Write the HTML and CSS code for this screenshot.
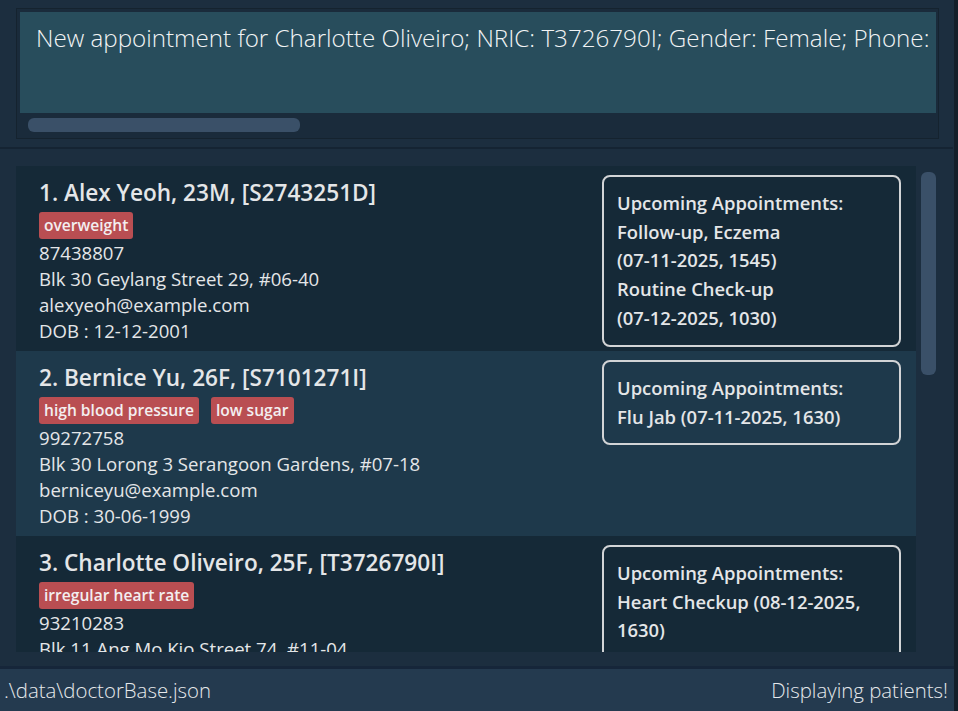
FILE: index.html
```html
<!DOCTYPE html>
<html>
<head>
<meta charset="utf-8">
<link rel="stylesheet" href="styles.css">
</head>
<body>
<div class="app">
  <section class="command">
    <div class="command-box">
      <div class="command-text">New appointment for Charlotte Oliveiro; NRIC: T3726790I; Gender: Female; Phone: 93210283</div>
      <div class="hscroll"><div class="hthumb"></div></div>
    </div>
  </section>
  <div class="separator"></div>
  <section class="list-panel">
    <div class="list">
      <div class="card odd">
        <div class="info">
          <div class="name">1. Alex Yeoh, 23M, [S2743251D]</div>
          <div class="tags"><span class="tag">overweight</span></div>
          <div class="line">87438807</div>
          <div class="line">Blk 30 Geylang Street 29, #06-40</div>
          <div class="line">alexyeoh@example.com</div>
          <div class="line">DOB : 12-12-2001</div>
        </div>
        <div class="appts">
          <div>Upcoming Appointments:</div>
          <div><span class="nb">Follow-up,</span> Eczema <span class="nb">(07-11-2025, 1545)</span></div>
          <div>Routine <span class="nb">Check-up</span> <span class="nb">(07-12-2025, 1030)</span></div>
        </div>
      </div>
      <div class="card even">
        <div class="info">
          <div class="name">2. Bernice Yu, 26F, [S7101271I]</div>
          <div class="tags"><span class="tag">high blood pressure</span><span class="tag">low sugar</span></div>
          <div class="line">99272758</div>
          <div class="line">Blk 30 Lorong 3 Serangoon Gardens, #07-18</div>
          <div class="line">berniceyu@example.com</div>
          <div class="line">DOB : 30-06-1999</div>
        </div>
        <div class="appts">
          <div>Upcoming Appointments:</div>
          <div>Flu Jab <span class="nb">(07-11-2025, 1630)</span></div>
        </div>
      </div>
      <div class="card odd">
        <div class="info">
          <div class="name">3. Charlotte Oliveiro, 25F, [T3726790I]</div>
          <div class="tags"><span class="tag">irregular heart rate</span></div>
          <div class="line">93210283</div>
          <div class="line">Blk 11 Ang Mo Kio Street 74, #11-04</div>
        </div>
        <div class="appts">
          <div>Upcoming Appointments:</div>
          <div>Heart Checkup <span class="nb">(08-12-2025,</span> 1630)</div>
        </div>
      </div>
    </div>
    <div class="vscroll"><div class="vthumb"></div></div>
  </section>
  <footer class="status">
    <span>.\data\doctorBase.json</span>
    <span>Displaying patients!</span>
  </footer>
</div>
<div class="edge"></div>
</body>
</html>
```

FILE: styles.css
```css
* { box-sizing: border-box; }
html, body { margin: 0; padding: 0; }
body {
  width: 958px;
  height: 711px;
  overflow: hidden;
  display: flex;
  background: #1c2e3f;
  font-family: "Open Sans", "Noto Sans", sans-serif;
  color: #e4e6e8;
}
.app {
  width: 954px;
  height: 711px;
  display: flex;
  flex-direction: column;
  background: #1c2e3f;
}
.edge {
  width: 4px;
  height: 711px;
  background: #141f2a;
}
.command {
  padding: 8px 15px 0 16px;
  height: 147px;
}
.command-box {
  background: #1a2b3b;
  border: 1px solid #15232f;
  padding: 3px 2px 1px 3px;
  height: 131px;
  display: flex;
  flex-direction: column;
}
.command-text {
  height: 101px;
  background: #284d5c;
  color: #f2f4f5;
  font-size: 24.2px;
  font-weight: 300;
  line-height: 32px;
  white-space: nowrap;
  overflow: hidden;
  padding: 10px 0 0 16px;
}
.hscroll {
  flex: 1;
  padding: 5px 0 0 8px;
}
.hthumb {
  width: 272px;
  height: 14px;
  border-radius: 6px;
  background: #3a5068;
}
.separator {
  height: 2px;
  background: #152433;
  margin-right: 1px;
}
.list-panel {
  flex: 1;
  display: flex;
  padding: 17px 15px 14px 16px;
  min-height: 0;
}
.list {
  flex: 1;
  overflow: hidden;
}
.card {
  display: flex;
  justify-content: space-between;
  padding: 0 15px 0 23px;
}
.card.odd { background: #152937; }
.card.even { background: #1e394b; }
.info {
  padding: 13px 0 7px;
}
.name {
  font-size: 22.6px;
  font-weight: 600;
  line-height: 28px;
  white-space: nowrap;
}
.tags {
  display: flex;
  gap: 12px;
  margin-top: 5px;
  margin-bottom: 1px;
}
.tag {
  background: #b94e52;
  color: #f3eef0;
  font-size: 15.6px;
  font-weight: 600;
  height: 27px;
  line-height: 27px;
  padding: 0 5px;
  border-radius: 3px;
}
.line {
  font-size: 18.6px;
  line-height: 26px;
  white-space: nowrap;
}
.appts {
  align-self: flex-start;
  margin-top: 9px;
  width: 299px;
  flex: none;
  border: 2px solid #d2d4d6;
  border-radius: 8px;
  padding: 12px 13px;
  font-size: 18.4px;
  font-weight: 600;
  line-height: 28.7px;
}
.nb { white-space: nowrap; }
.vscroll {
  width: 23px;
  flex: none;
  padding: 6px 0 0 5px;
}
.vthumb {
  width: 15px;
  height: 203px;
  border-radius: 6px;
  background: #3a5068;
}
.status {
  height: 45px;
  flex: none;
  border-top: 3px solid #16263a;
  background: #243a4f;
  display: flex;
  justify-content: space-between;
  align-items: center;
  padding: 0 6px 0 4px;
  font-size: 20.4px;
  font-weight: 300;
  color: #e6e9ec;
}
```
